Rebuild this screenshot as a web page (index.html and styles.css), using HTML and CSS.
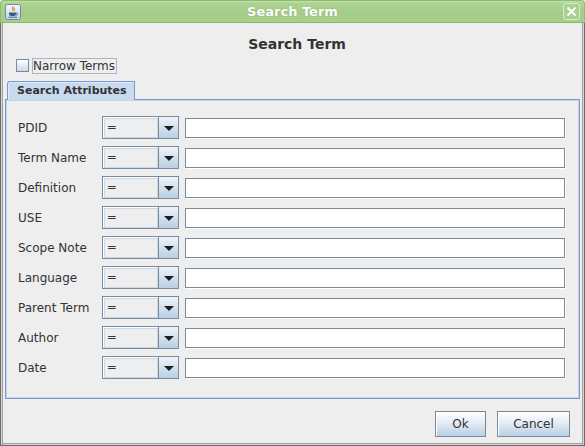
FILE: index.html
```html
<!DOCTYPE html>
<html>
<head>
<meta charset="utf-8">
<link rel="stylesheet" href="styles.css">
</head>
<body>
<div class="window">
  <div class="titlebar">
    <span class="app-icon">
      <svg width="16" height="16" viewBox="0 0 16 16">
        <defs>
          <linearGradient id="ig" x1="0" y1="0" x2="0" y2="1">
            <stop offset="0" stop-color="#f4f8fc"/>
            <stop offset="1" stop-color="#c2d4e8"/>
          </linearGradient>
        </defs>
        <rect x="0.5" y="0.5" width="15" height="15" rx="2" fill="url(#ig)" stroke="#6f88a8"/>
        <path d="M8 2.5 C6.5 4 9.5 5 7.6 7" fill="none" stroke="#e8741c" stroke-width="1.2"/>
        <path d="M9.6 3.5 C8.8 4.6 10.4 5.2 9.4 6.6" fill="none" stroke="#e8741c" stroke-width="0.9"/>
        <path d="M4 8.5 H11 V10 C11 11.3 10 12 9 12 H6 C5 12 4 11.3 4 10 Z" fill="#3d5a80"/>
        <path d="M11 9 C13 9 13 11 11 11" fill="none" stroke="#3d5a80" stroke-width="0.9"/>
        <path d="M3.5 13.2 H12" stroke="#3d5a80" stroke-width="0.9"/>
      </svg>
    </span>
    <span class="title">Search Term</span>
    <span class="close-btn">
      <svg width="17" height="17" viewBox="0 0 17 17">
        <rect x="0.5" y="0.5" width="16" height="16" rx="2" fill="#a9d08e" stroke="#d6ecc6"/>
        <path d="M4.5 4.5 L12.5 12.5 M12.5 4.5 L4.5 12.5" stroke="#ffffff" stroke-width="2"/>
      </svg>
    </span>
  </div>
  <div class="frame">
    <div class="heading">Search Term</div>
    <div class="check-row">
      <span class="checkbox"></span>
      <span class="check-label">Narrow Terms</span>
    </div>
    <div class="tabs">
      <div class="tab">Search Attributes</div>
    </div>
    <div class="panel">
      <div class="row"><span class="label">PDID</span><span class="combo"><span class="combo-value">=</span><span class="combo-arrow"><span class="tri"></span></span></span><span class="field"></span></div>
      <div class="row"><span class="label">Term Name</span><span class="combo"><span class="combo-value">=</span><span class="combo-arrow"><span class="tri"></span></span></span><span class="field"></span></div>
      <div class="row"><span class="label">Definition</span><span class="combo"><span class="combo-value">=</span><span class="combo-arrow"><span class="tri"></span></span></span><span class="field"></span></div>
      <div class="row"><span class="label">USE</span><span class="combo"><span class="combo-value">=</span><span class="combo-arrow"><span class="tri"></span></span></span><span class="field"></span></div>
      <div class="row"><span class="label">Scope Note</span><span class="combo"><span class="combo-value">=</span><span class="combo-arrow"><span class="tri"></span></span></span><span class="field"></span></div>
      <div class="row"><span class="label">Language</span><span class="combo"><span class="combo-value">=</span><span class="combo-arrow"><span class="tri"></span></span></span><span class="field"></span></div>
      <div class="row"><span class="label">Parent Term</span><span class="combo"><span class="combo-value">=</span><span class="combo-arrow"><span class="tri"></span></span></span><span class="field"></span></div>
      <div class="row"><span class="label">Author</span><span class="combo"><span class="combo-value">=</span><span class="combo-arrow"><span class="tri"></span></span></span><span class="field"></span></div>
      <div class="row"><span class="label">Date</span><span class="combo"><span class="combo-value">=</span><span class="combo-arrow"><span class="tri"></span></span></span><span class="field"></span></div>
    </div>
    <div class="buttons">
      <span class="btn btn-ok">Ok</span>
      <span class="btn btn-cancel">Cancel</span>
    </div>
  </div>
</div>
</body>
</html>
```

FILE: styles.css
```css
* { box-sizing: border-box; }
html, body {
  margin: 0;
  padding: 0;
  background: #eeeeee;
}
body {
  font-family: "DejaVu Sans", "Liberation Sans", sans-serif;
  font-size: 12px;
  color: #333333;
}
.window {
  width: 585px;
  height: 446px;
  display: flex;
  flex-direction: column;
  background: #eeeeee;
}
.titlebar {
  height: 23px;
  flex: none;
  position: relative;
  display: flex;
  align-items: center;
  justify-content: center;
  background: linear-gradient(to bottom, #c4e2ae 0px, #aed493 2px, #a4cc88 12px, #a8cf8c 21px);
  border-top: 1px solid #8fbd70;
  border-left: 1px solid #8fbd70;
  border-right: 1px solid #8fbd70;
  border-bottom: 1px solid #86b866;
  border-radius: 4px 4px 0 0;
}
.title {
  font-weight: bold;
  font-size: 13px;
  color: #ffffff;
  text-shadow: 0 0 1px #6f9a55;
}
.app-icon {
  position: absolute;
  left: 4px;
  top: 3px;
  width: 16px;
  height: 16px;
  display: block;
}
.app-icon svg, .close-btn svg { display: block; }
.close-btn {
  position: absolute;
  right: 4px;
  top: 2px;
  width: 17px;
  height: 17px;
  display: block;
}
.frame {
  flex: 1;
  display: flex;
  flex-direction: column;
  border-left: 1px solid #6a6a6a;
  border-right: 1px solid #6a6a6a;
  border-bottom: 1px solid #6a6a6a;
  box-shadow: inset 1px 0 0 #d6d6d6, inset 2px 0 0 #a0a0a0, inset -1px 0 0 #d6d6d6, inset -2px 0 0 #a0a0a0, inset 0 -1px 0 #d6d6d6, inset 0 -2px 0 #a0a0a0;
  padding: 0 3px 3px 3px;
}
.heading {
  margin-top: 13px;
  height: 17px;
  line-height: 17px;
  text-align: center;
  font-weight: bold;
  font-size: 14px;
  padding-left: 9px;
}
.check-row {
  margin-top: 4px;
  height: 17px;
  display: flex;
  align-items: center;
  padding-left: 12px;
}
.checkbox {
  width: 13px;
  height: 13px;
  border: 1px solid #7a8a99;
  background: linear-gradient(to bottom, #ffffff, #c8d8ea);
  margin-right: 3px;
}
.check-label {
  border: 1px solid #a3b8cc;
  height: 16px;
  line-height: 14px;
  padding: 0 1px 0 0;
  font-size: 12px;
}
.tabs {
  margin-top: 7px;
  height: 18px;
  display: flex;
  padding-left: 3px;
  position: relative;
  z-index: 1;
}
.tab {
  width: 128px;
  height: 19px;
  background: #c8daf0;
  border: 1px solid #7a98c8;
  border-bottom: none;
  border-radius: 3px 0 0 0;
  font-weight: bold;
  font-size: 11px;
  white-space: nowrap;
  line-height: 17px;
  padding-left: 9px;
  box-shadow: inset 1px 1px 0 #e0ecf8;
}
.panel {
  margin: 0 1px;
  height: 300px;
  border: 1px solid #7a98c8;
  box-shadow: inset 0 0 0 1px #c4d6ee;
  padding: 16px 14px 0 12px;
  display: flex;
  flex-direction: column;
  gap: 7px;
}
.row {
  display: flex;
  align-items: center;
  height: 23px;
}
.label {
  width: 84px;
  font-size: 12px;
}
.combo {
  width: 78px;
  height: 23px;
  border: 1px solid #7a8a99;
  display: flex;
  background: #eeeeee;
}
.combo-value {
  flex: 1;
  border-top: 1px solid #ffffff;
  border-left: 1px solid #ffffff;
  box-shadow: inset 1px 1px 0 #c8d8ea, inset -1px -1px 0 #c8d8ea;
  padding-left: 3px;
  line-height: 19px;
  font-size: 12px;
}
.combo-arrow {
  width: 20px;
  border-left: 1px solid #7a8a99;
  background: linear-gradient(to bottom, #eef3f9, #b8cfe5);
  display: flex;
  align-items: center;
  justify-content: center;
}
.tri {
  width: 0;
  height: 0;
  border-left: 5px solid transparent;
  border-right: 5px solid transparent;
  border-top: 5px solid #1e1e1e;
  margin-top: 1px;
}
.field {
  margin-left: 6px;
  width: 381px;
  height: 20px;
  margin-top: 1px;
  background: #ffffff;
  border: 1px solid #7a8a99;
  box-shadow: 1px 1px 0 #ffffff;
}
.buttons {
  margin-top: 12px;
  display: flex;
  justify-content: flex-end;
  gap: 11px;
  padding-right: 11px;
}
.btn {
  height: 26px;
  border: 1px solid #7a8a99;
  background: linear-gradient(to bottom, #ffffff 0%, #e4ecf5 45%, #b8cfe5 100%);
  box-shadow: inset 1px 1px 0 #ffffff;
  display: flex;
  align-items: center;
  justify-content: center;
  font-size: 12px;
  padding-bottom: 1px;
}
.btn-ok { width: 51px; }
.btn-cancel { width: 73px; }
```
